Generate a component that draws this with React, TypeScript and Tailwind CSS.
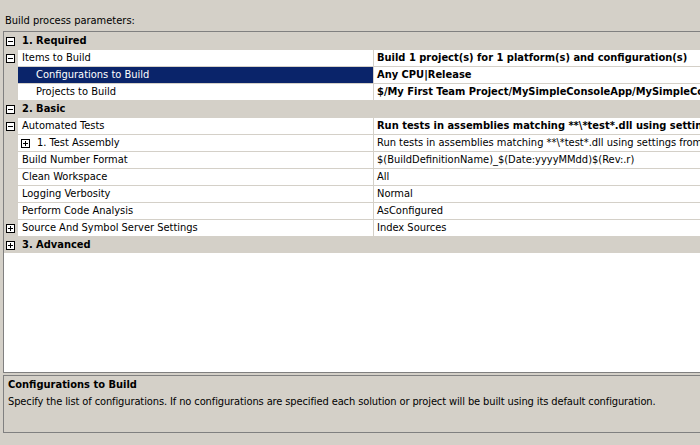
import React from 'react';

type Row =
  | { kind: 'category'; label: string; open: boolean }
  | {
      kind: 'item';
      label: string;
      value: string;
      boldValue?: boolean;
      indent?: boolean;
      gutter?: 'minus' | 'plus';
      inline?: 'plus';
      selected?: boolean;
    };

const ROWS: Row[] = [
  { kind: 'category', label: '1. Required', open: true },
  {
    kind: 'item',
    label: 'Items to Build',
    value: 'Build 1 project(s) for 1 platform(s) and configuration(s)',
    boldValue: true,
    gutter: 'minus',
  },
  {
    kind: 'item',
    label: 'Configurations to Build',
    value: 'Any CPU|Release',
    boldValue: true,
    indent: true,
    selected: true,
  },
  {
    kind: 'item',
    label: 'Projects to Build',
    value: '$/My First Team Project/MySimpleConsoleApp/MySimpleConsoleApp.sln',
    boldValue: true,
    indent: true,
  },
  { kind: 'category', label: '2. Basic', open: true },
  {
    kind: 'item',
    label: 'Automated Tests',
    value: 'Run tests in assemblies matching **\\*test*.dll using settings from $(Default)',
    boldValue: true,
    gutter: 'minus',
  },
  {
    kind: 'item',
    label: '1. Test Assembly',
    value: 'Run tests in assemblies matching **\\*test*.dll using settings from $(Default)',
    inline: 'plus',
  },
  { kind: 'item', label: 'Build Number Format', value: '$(BuildDefinitionName)_$(Date:yyyyMMdd)$(Rev:.r)' },
  { kind: 'item', label: 'Clean Workspace', value: 'All' },
  { kind: 'item', label: 'Logging Verbosity', value: 'Normal' },
  { kind: 'item', label: 'Perform Code Analysis', value: 'AsConfigured' },
  { kind: 'item', label: 'Source And Symbol Server Settings', value: 'Index Sources', gutter: 'plus' },
  { kind: 'category', label: '3. Advanced', open: false },
];

// little win32 style expander box
function Expander({ open }: { open: boolean }) {
  return (
    <svg width="9" height="9" viewBox="0 0 9 9" className="block shrink-0">
      <rect x="0.5" y="0.5" width="8" height="8" fill="white" stroke="#000" />
      <line x1="2" y1="4.5" x2="7" y2="4.5" stroke="#000" />
      {!open && <line x1="4.5" y1="2" x2="4.5" y2="7" stroke="#000" />}
    </svg>
  );
}

function GridRow({ row }: { row: Row }) {
  if (row.kind === 'category') {
    return (
      <div className="flex h-[17px] border-t border-[#d4d0c8] bg-[#d4d0c8]">
        <div className="flex w-[14px] shrink-0 items-center pl-[2px] pt-[1px]">
          <Expander open={row.open} />
        </div>
        <div className="pl-[4px] font-bold leading-[16px] whitespace-nowrap">{row.label}</div>
      </div>
    );
  }

  return (
    <div className="flex h-[17px]">
      <div className="flex w-[14px] shrink-0 items-center pl-[2px] pt-[1px] bg-[#d4d0c8]">
        {row.gutter && <Expander open={row.gutter === 'minus'} />}
      </div>
      <div
        className={`flex w-[355px] shrink-0 items-center border-t border-[#d4d0c8] whitespace-nowrap ${
          row.selected ? 'bg-[#0a246a] text-white' : 'bg-white'
        } ${row.indent ? 'pl-[18px]' : row.inline ? 'pl-[3px]' : 'pl-[4px]'}`}
      >
        {row.inline && (
          <span className="mr-[7px] pt-[1px]">
            <Expander open={false} />
          </span>
        )}
        <span className="leading-[16px]">{row.label}</span>
      </div>
      <div
        className={`flex-1 border-t border-l border-[#d4d0c8] bg-white pl-[3px] leading-[16px] whitespace-nowrap overflow-hidden ${
          row.boldValue ? 'font-bold' : ''
        }`}
      >
        {row.value}
      </div>
    </div>
  );
}

export default function App() {
  return (
    <div
      className="w-[700px] h-[445px] overflow-hidden bg-[#d4d0c8] text-[11px] text-black flex flex-col"
      style={{ fontFamily: '"DejaVu Sans Condensed", "Liberation Sans", sans-serif' }}
    >
      <div className="h-[31px] shrink-0 pl-[5px] pt-[14px] leading-[13px] whitespace-nowrap">
        Build process parameters:
      </div>

      {/* property grid */}
      <div className="ml-[3px] w-[740px] h-[342px] shrink-0 border-t border-l border-b border-[#808080] bg-white flex flex-col">
        {ROWS.map((r, i) => (
          <GridRow key={i} row={r} />
        ))}
      </div>

      {/* description pane */}
      <div className="ml-[3px] mt-[2px] w-[740px] h-[58px] shrink-0 border border-[#808080] pl-[4px] pt-[1px]">
        <div className="font-bold leading-[16px] whitespace-nowrap">Configurations to Build</div>
        <div className="mt-[1px] leading-[16px] whitespace-nowrap tracking-[-0.11px]">
          Specify the list of configurations. If no configurations are specified each solution or project will be built
          using its default configuration.
        </div>
      </div>
    </div>
  );
}
